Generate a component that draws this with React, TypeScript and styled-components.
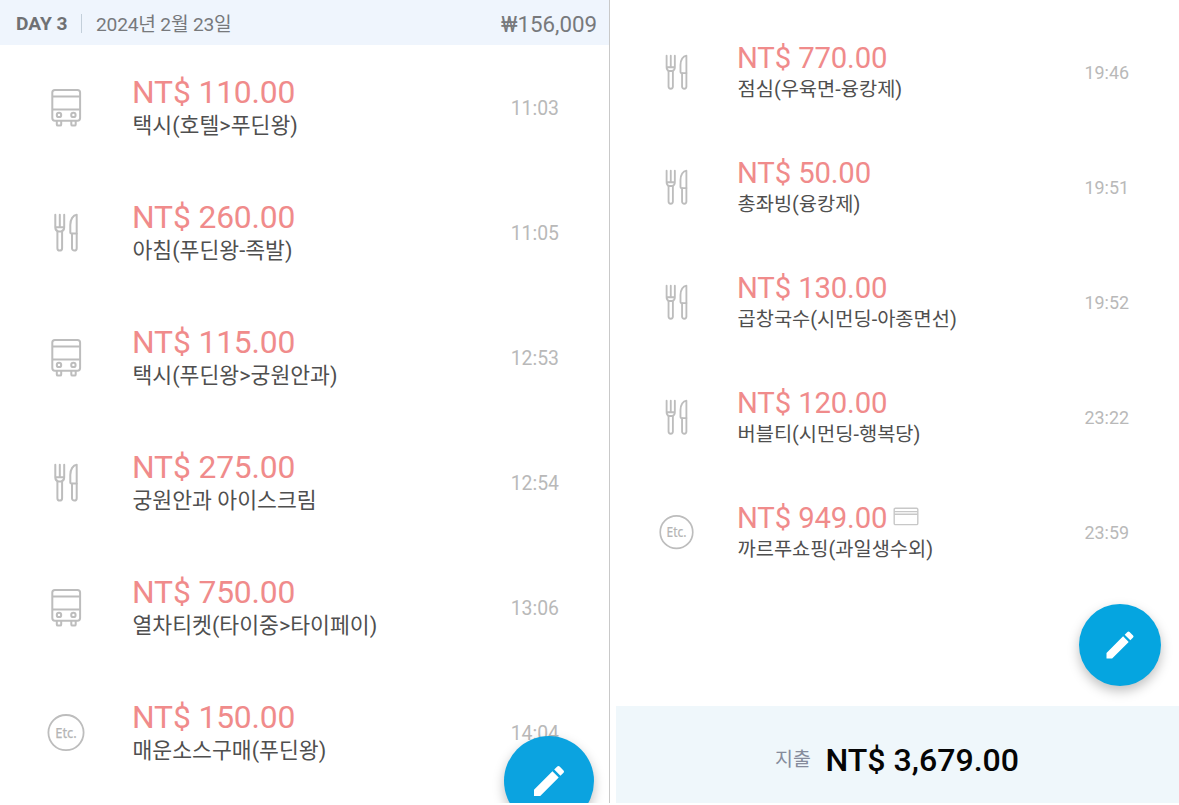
import { FC } from "react";
import styled, { createGlobalStyle, css } from "styled-components";

type IconType = "bus" | "food" | "etc";

type ExpenseType = {
  icon: IconType;
  amount: string;
  memo: string;
  time: string;
  card?: boolean;
};

type ExpenseRowType = {
  expense: ExpenseType;
  small?: boolean;
};

type SizeProps = { $small?: boolean };

const GlobalStyle = createGlobalStyle`
  body {
    margin: 0;
    background-color: #fff;
    font-family: Roboto, "Noto Sans CJK KR", sans-serif;
  }
`;

const Screens = styled.div`
  width: 1179px;
  height: 803px;
  display: flex;
  overflow: hidden;
`;

const DayPanel = styled.section`
  position: relative;
  box-sizing: border-box;
  width: 610px;
  height: 803px;
  border-right: 1px solid #c9c9c9;
  overflow: hidden;
`;

const TotalPanel = styled.section`
  position: relative;
  box-sizing: border-box;
  width: 563px;
  height: 803px;
  margin-left: 6px;
  padding-top: 15px;
  display: flex;
  flex-direction: column;
`;

const DayHeader = styled.header`
  box-sizing: border-box;
  height: 45px;
  padding: 3px 12px 0 16px;
  display: flex;
  align-items: center;
  background-color: #eff5fd;
  color: #77797c;
  line-height: 42px;
  white-space: nowrap;
`;

const DayName = styled.span`
  width: 65px;
  color: #6f7174;
  font-weight: 700;
  font-size: 19.2px;
`;

const Divider = styled.span`
  width: 1px;
  height: 19px;
  margin: -1px 14px 0 0;
  background-color: #c3cfda;
`;

const DayDate = styled.span`
  padding-top: 2px;
  font-size: 19.2px;
  letter-spacing: -0.2px;
`;

const DayTotal = styled.span`
  margin-left: auto;
  font-size: 22.3px;
`;

const Row = styled.div<SizeProps>`
  box-sizing: border-box;
  display: flex;
  align-items: center;
  height: 125px;
  padding: 0 50px 0 46px;

  ${({ $small }) =>
    $small &&
    css`
      height: 114.9px;
      padding: 0 50px 0 42px;
    `}
`;

const IconSlot = styled.div<SizeProps>`
  width: ${({ $small }) => ($small ? "79px" : "86px")};
  display: flex;

  svg {
    width: ${({ $small }) => ($small ? "37px" : "40px")};
    height: ${({ $small }) => ($small ? "37px" : "40px")};
  }
`;

const Detail = styled.div<SizeProps>`
  flex: 1;
  padding-top: ${({ $small }) => ($small ? "1px" : "2px")};
  white-space: nowrap;
`;

const Amount = styled.div<SizeProps>`
  display: flex;
  align-items: center;
  height: ${({ $small }) => ($small ? "30px" : "33px")};
  color: #f08b8b;
  font-size: ${({ $small }) => ($small ? "29.3px" : "31.8px")};
  letter-spacing: -0.14px;

  svg {
    margin: -3px 0 0 6px;
  }
`;

const Memo = styled.div<SizeProps>`
  height: ${({ $small }) => ($small ? "30px" : "33px")};
  margin-left: 0.5px;
  line-height: ${({ $small }) => ($small ? "33px" : "33px")};
  color: #4f4f4f;
  font-size: ${({ $small }) => ($small ? "19.8px" : "21.6px")};
`;

const Time = styled.span<SizeProps>`
  padding-top: 2px;
  color: #b9b9b9;
  font-size: ${({ $small }) => ($small ? "17.9px" : "19.4px")};
  line-height: 24px;
`;

const EditButton = styled.button<SizeProps>`
  position: absolute;
  left: 504px;
  top: 736px;
  width: 90px;
  height: 90px;
  padding: 0;
  border: 0;
  border-radius: 50%;
  display: flex;
  align-items: center;
  justify-content: center;
  background-color: #0ba3e0;
  box-shadow: 0 5px 12px rgba(0, 0, 0, 0.25);

  svg {
    width: 40px;
    height: 40px;
  }

  ${({ $small }) =>
    $small &&
    css`
      left: 462.5px;
      top: 603.5px;
      width: 82.5px;
      height: 82.5px;
      background-color: #05a5e0;

      svg {
        width: 36px;
        height: 36px;
      }
    `}
`;

const TotalBar = styled.footer`
  box-sizing: border-box;
  height: 97px;
  margin-top: auto;
  padding: 10px 0 0 159px;
  display: flex;
  align-items: center;
  background-color: #eff7fb;
  white-space: nowrap;
`;

const TotalLabel = styled.span`
  width: 50.5px;
  color: #858b9b;
  font-size: 19.5px;
  line-height: 26px;
`;

const TotalAmount = styled.span`
  color: #050505;
  font-size: 32.1px;
  font-weight: 500;
`;

const dayExpenses: ExpenseType[] = [
  { icon: "bus", amount: "NT$ 110.00", memo: "택시(호텔>푸딘왕)", time: "11:03" },
  { icon: "food", amount: "NT$ 260.00", memo: "아침(푸딘왕-족발)", time: "11:05" },
  { icon: "bus", amount: "NT$ 115.00", memo: "택시(푸딘왕>궁원안과)", time: "12:53" },
  { icon: "food", amount: "NT$ 275.00", memo: "궁원안과 아이스크림", time: "12:54" },
  { icon: "bus", amount: "NT$ 750.00", memo: "열차티켓(타이중>타이페이)", time: "13:06" },
  { icon: "etc", amount: "NT$ 150.00", memo: "매운소스구매(푸딘왕)", time: "14:04" },
];

const eveningExpenses: ExpenseType[] = [
  { icon: "food", amount: "NT$ 770.00", memo: "점심(우육면-융캉제)", time: "19:46" },
  { icon: "food", amount: "NT$ 50.00", memo: "총좌빙(융캉제)", time: "19:51" },
  { icon: "food", amount: "NT$ 130.00", memo: "곱창국수(시먼딩-아종면선)", time: "19:52" },
  { icon: "food", amount: "NT$ 120.00", memo: "버블티(시먼딩-행복당)", time: "23:22" },
  { icon: "etc", amount: "NT$ 949.00", memo: "까르푸쇼핑(과일생수외)", time: "23:59", card: true },
];

const BusIcon = () => (
  <svg viewBox="0 0 40 40" fill="none" stroke="#bdbdbd" strokeWidth="2">
    <rect x="6.3" y="1.9" width="27.8" height="30.8" rx="2.6" />
    <path d="M6.3 8.5h27.8M6.3 21.6h27.8" />
    <circle cx="13" cy="26.9" r="2.2" />
    <circle cx="27.4" cy="26.9" r="2.2" />
    <path d="M10.8 33v3.4q0 1.2 1.2 1.2h2q1.2 0 1.2-1.2V33M25.3 33v3.4q0 1.2 1.2 1.2h2q1.2 0 1.2-1.2V33" />
  </svg>
);

const FoodIcon = () => (
  <svg
    viewBox="0 0 40 40"
    fill="none"
    stroke="#bdbdbd"
    strokeWidth="2"
    strokeLinecap="round"
    strokeLinejoin="round"
  >
    <path d="M9.3 1.8v12.4q0 3.4 3 4.2h2.9q3-.8 3-4.2V1.8M13.8 1.8v12M9.5 14.3h8.6" />
    <path d="M11.4 18.6v16.6a2.35 2.35 0 0 0 4.7 0V18.6" />
    <path d="M30.7 20.6V1.8c-3.6.2-6.4 4.6-6.4 10.1v7.6q0 1.1 1.1 1.1z" />
    <path d="M26 20.8v14.4a2.35 2.35 0 0 0 4.7 0V20.8" />
  </svg>
);

const EtcIcon = () => (
  <svg viewBox="0 0 40 40">
    <circle cx="20" cy="19.6" r="17.6" fill="none" stroke="#bdbdbd" strokeWidth="1.8" />
    <text
      x="20"
      y="25"
      fill="#b5b5b5"
      stroke="#b5b5b5"
      strokeWidth="0.25"
      fontFamily="Noto Sans"
      fontSize="15"
      textAnchor="middle"
      textLength="21.5"
      lengthAdjust="spacingAndGlyphs"
    >
      Etc.
    </text>
  </svg>
);

const CardIcon = () => (
  <svg width="26" height="19" viewBox="0 0 26 19" fill="none" stroke="#c8c8c8" strokeWidth="1.4">
    <rect x="1.2" y="1.2" width="23.6" height="16.4" rx="1.2" />
    <path d="M1.2 4.6h23.6M1.2 7.3h23.6" />
  </svg>
);

const PencilIcon = () => (
  <svg viewBox="0 0 24 24" fill="#fff">
    <path d="M3 17.25V21h3.75L17.81 9.94l-3.75-3.75L3 17.25zM20.71 7.04a1 1 0 0 0 0-1.41l-2.34-2.34a1 1 0 0 0-1.41 0l-1.83 1.83 3.75 3.75 1.83-1.83z" />
  </svg>
);

const icons: Record<IconType, FC> = {
  bus: BusIcon,
  food: FoodIcon,
  etc: EtcIcon,
};

const ExpenseRow: FC<ExpenseRowType> = ({ expense, small }) => {
  const Icon = icons[expense.icon];

  return (
    <Row $small={small}>
      <IconSlot $small={small}>
        <Icon />
      </IconSlot>
      <Detail $small={small}>
        <Amount $small={small}>
          {expense.amount}
          {expense.card && <CardIcon />}
        </Amount>
        <Memo $small={small}>{expense.memo}</Memo>
      </Detail>
      <Time $small={small}>{expense.time}</Time>
    </Row>
  );
};

function App() {
  return (
    <>
      <GlobalStyle />
      <Screens>
        <DayPanel>
          <DayHeader>
            <DayName>DAY 3</DayName>
            <Divider />
            <DayDate>2024년 2월 23일</DayDate>
            <DayTotal>₩156,009</DayTotal>
          </DayHeader>
          {dayExpenses.map((expense) => (
            <ExpenseRow expense={expense} key={expense.time} />
          ))}
          <EditButton aria-label="edit">
            <PencilIcon />
          </EditButton>
        </DayPanel>
        <TotalPanel>
          {eveningExpenses.map((expense) => (
            <ExpenseRow expense={expense} key={expense.time} small />
          ))}
          <TotalBar>
            <TotalLabel>지출</TotalLabel>
            <TotalAmount>NT$ 3,679.00</TotalAmount>
          </TotalBar>
          <EditButton aria-label="edit" $small>
            <PencilIcon />
          </EditButton>
        </TotalPanel>
      </Screens>
    </>
  );
}

export default App;
